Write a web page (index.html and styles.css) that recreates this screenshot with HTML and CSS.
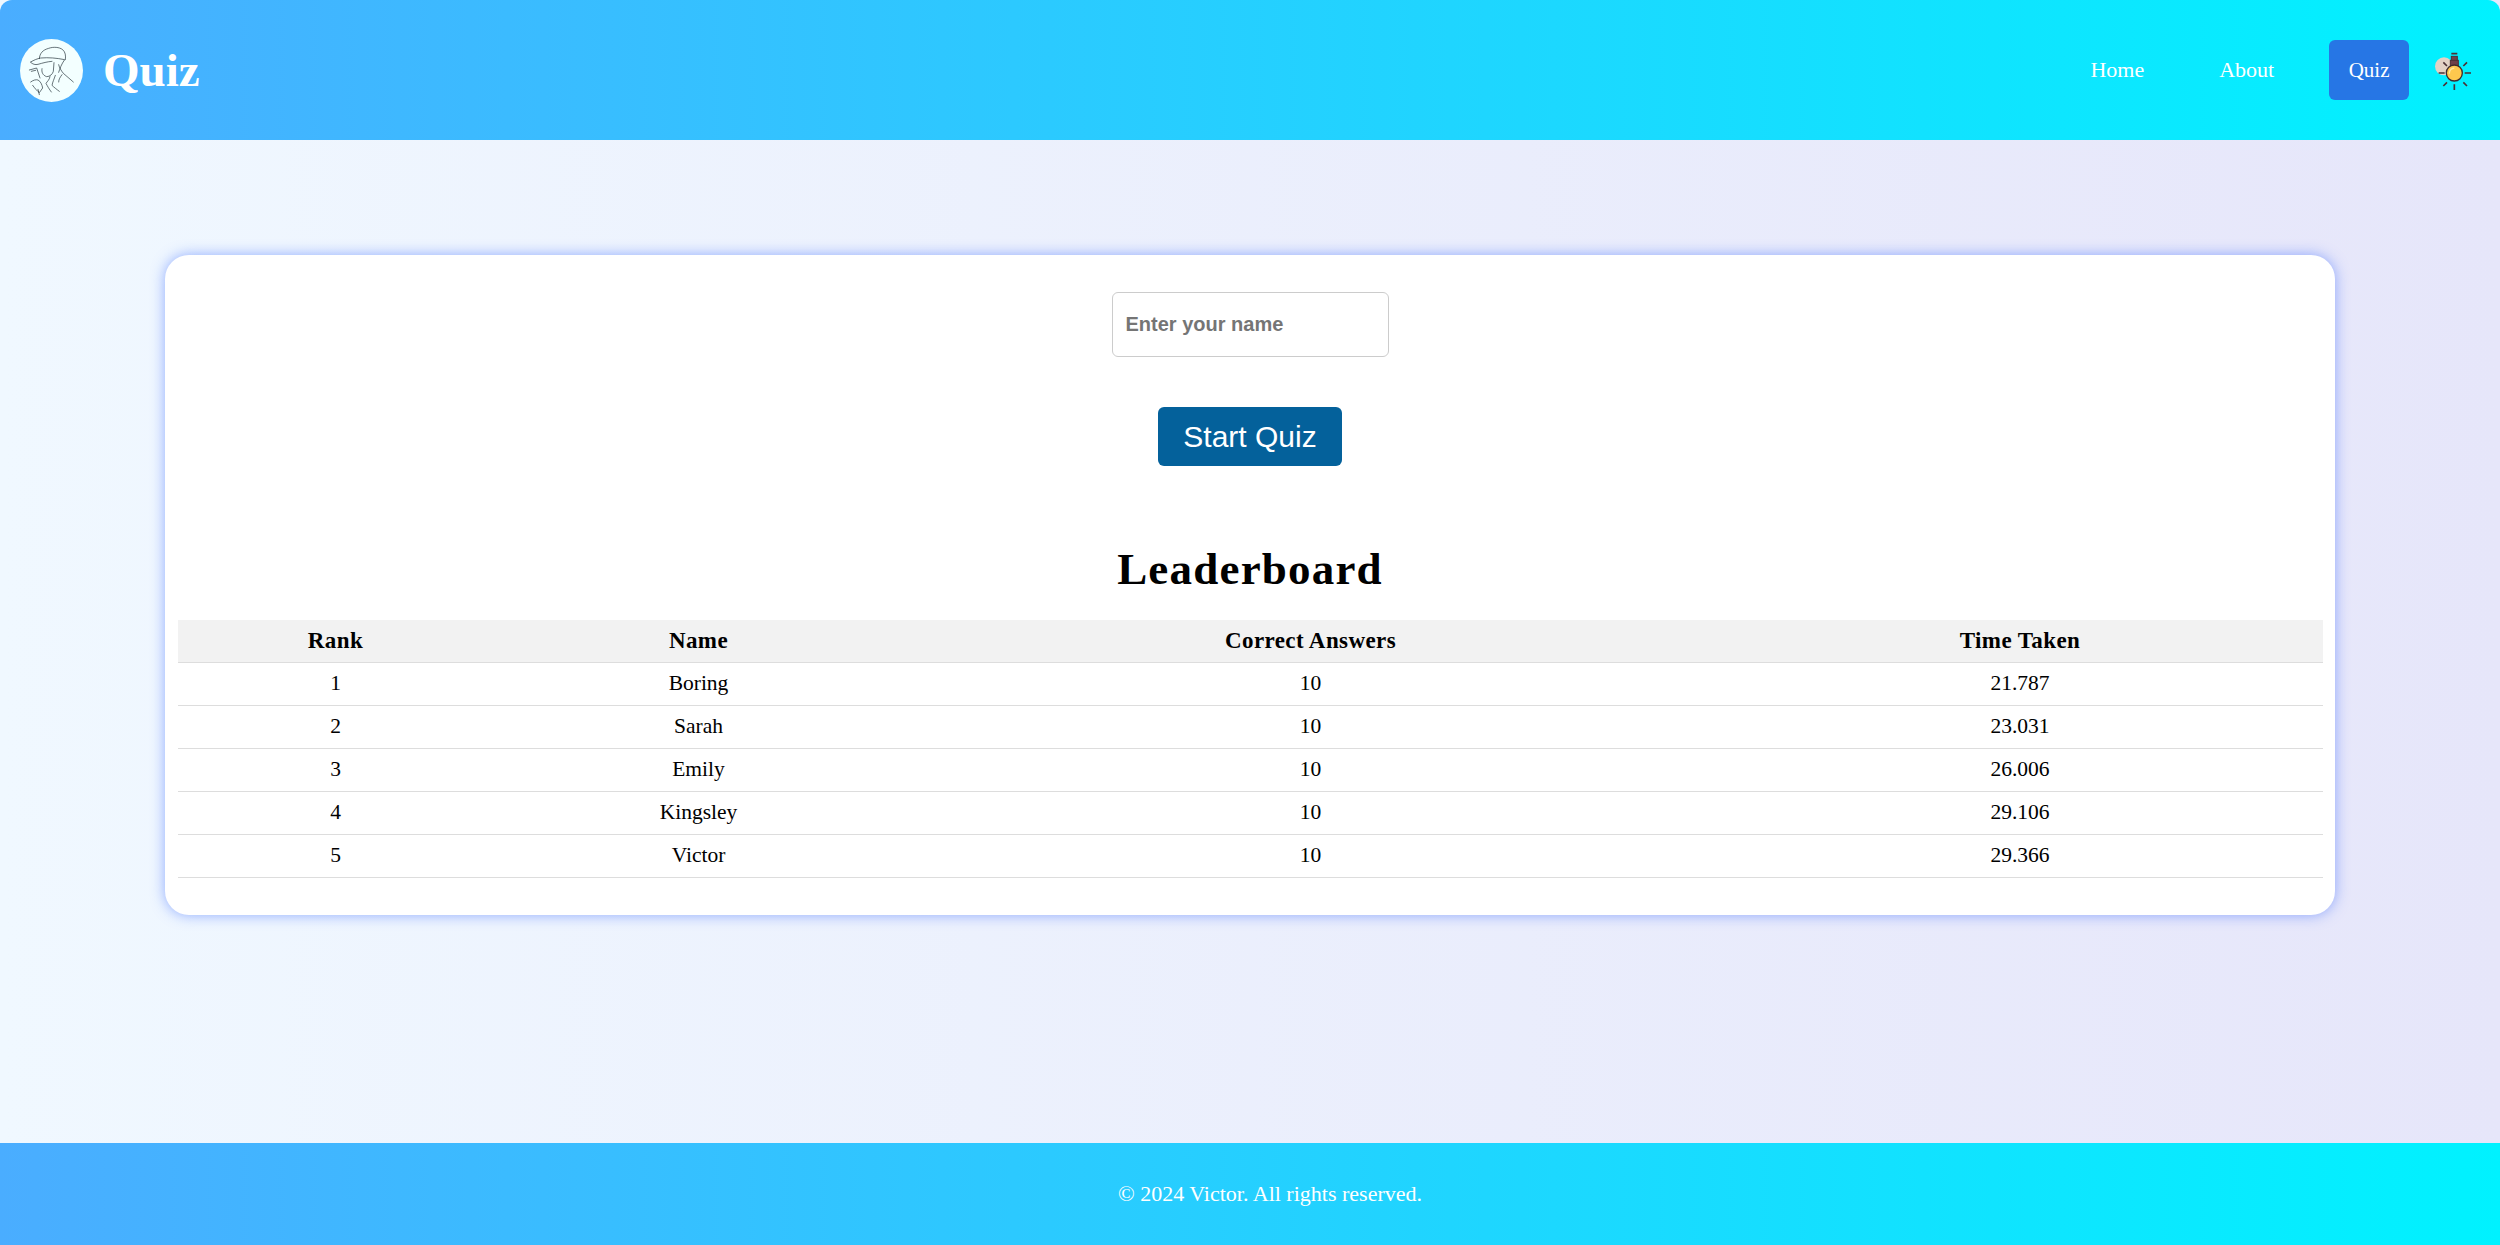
FILE: index.html
```html
<!DOCTYPE html>
<html lang="en">
<head>
<meta charset="utf-8">
<title>Quiz</title>
<link rel="stylesheet" href="styles.css">
</head>
<body>
<header class="site-header">
  <div class="brand">
    <svg class="logo" viewBox="60 115 189 189" aria-hidden="true">
      <circle cx="154.5" cy="209.5" r="94.5" fill="#f3ffff"/>
      <g fill="none" stroke="#16252c" stroke-width="1.9" stroke-linecap="round" stroke-linejoin="round">
        <path d="M118 174c1-16 10-26 28-31 14-5 32-4 42 4 8 7 10 18 8 30"/>
        <path d="M92 184c10-6 20-10 30-12 24-2 48 0 72 5-10 14-14 26-18 38"/>
        <path d="M92 185c6 6 14 8 22 6 14-4 28-8 42-9"/>
        <path d="M126 204c-2 10 2 20 14 24 10 0 18-8 20-16l2-26"/>
        <path d="M88 208l22-6 10 30M94 212l13-3"/>
        <path d="M92 244c8-6 16-8 22-6 8 4 12 14 14 24l-10 14c-6-4-14-14-20-22"/>
        <path d="M114 266l4 16M150 228c-2 10-8 14-12 20 4 8 10 18 16 26"/>
        <path d="M176 192c2 10 8 18 14 26l30 26M166 224c-4 12-8 20-10 30 6 6 14 12 22 18M186 222c-6 8-10 14-10 22"/>
      </g>
    </svg>
    <span class="brand-name">Quiz</span>
  </div>
  <nav class="site-nav">
    <a class="nav-link" href="#">Home</a>
    <a class="nav-link" href="#">About</a>
    <a class="nav-link nav-active" href="#">Quiz</a>
    <svg class="bulb" viewBox="0 0 180 180" aria-hidden="true">
      <circle cx="60" cy="82" r="27" fill="#e3d2c5"/>
      <g stroke="#4b3236" stroke-width="5" fill="none">
        <path d="M82 44h18M44 102h18M122 102h19M91 136v17M58 70l11 11M129 70l-11 11M58 141l11-11M129 141l-11-11"/>
      </g>
      <rect x="82" y="52" width="18" height="14" fill="#6d4048" stroke="#4b3236" stroke-width="3"/>
      <rect x="79" y="64" width="24" height="16" fill="#6d4048" stroke="#4b3236" stroke-width="3"/>
      <circle cx="91" cy="102" r="24" fill="#fdc84e" stroke="#3f2b2e" stroke-width="4"/>
      <path d="M76 104c0-10 6-16 15-17" fill="none" stroke="#ffe6a0" stroke-width="4"/>
    </svg>
  </nav>
</header>

<main class="page-main">
  <section class="card">
    <input class="name-input" type="text" placeholder="Enter your name">
    <button class="start-btn" type="button">Start Quiz</button>
    <h2 class="board-title">Leaderboard</h2>
    <table class="board">
      <colgroup>
        <col class="col-rank"><col class="col-name"><col class="col-correct"><col class="col-time">
      </colgroup>
      <thead>
        <tr><th>Rank</th><th>Name</th><th>Correct Answers</th><th>Time Taken</th></tr>
      </thead>
      <tbody>
        <tr><td>1</td><td>Boring</td><td>10</td><td>21.787</td></tr>
        <tr><td>2</td><td>Sarah</td><td>10</td><td>23.031</td></tr>
        <tr><td>3</td><td>Emily</td><td>10</td><td>26.006</td></tr>
        <tr><td>4</td><td>Kingsley</td><td>10</td><td>29.106</td></tr>
        <tr><td>5</td><td>Victor</td><td>10</td><td>29.366</td></tr>
      </tbody>
    </table>
  </section>
</main>

<footer class="site-footer">
  <p class="copyright">© 2024 Victor. All rights reserved.</p>
</footer>
</body>
</html>
```
FILE: styles.css
```css
* { box-sizing: border-box; }
html, body { height: 100%; }
body {
  margin: 0;
  min-height: 100vh;
  display: flex;
  flex-direction: column;
  font-family: Georgia, "Liberation Serif", "Times New Roman", serif;
  background: linear-gradient(90deg, #f0f8ff, #e6e6fa);
  color: #000;
}
.site-header {
  height: 140px;
  flex: none;
  display: flex;
  align-items: center;
  justify-content: space-between;
  padding: 0 21px 0 20px;
  background: linear-gradient(90deg, #4aadff, #00f2ff);
  border-radius: 12px 12px 0 0;
}
.brand { display: flex; align-items: center; gap: 20px; }
.logo { width: 63px; height: 63px; display: block; }
.brand-name { color: #fff; font-size: 47px; font-weight: 700; line-height: 1; }
.site-nav { display: flex; align-items: center; }
.nav-link {
  color: #fff;
  text-decoration: none;
  font-size: 22px;
  line-height: 60px;
  height: 60px;
  padding: 0 20px;
  margin-right: 35px;
  border-radius: 6px;
}
.nav-active { background: #2676e5; margin-right: 16px; padding: 0 19.5px; font-size: 21px; }
.bulb { width: 60px; height: 60px; margin-top: -2px; margin-right: -5px; margin-left: -1px; }
.page-main { flex: 1; padding: 115px 165px 0; }
.card {
  height: 660px;
  background: #fff;
  border-radius: 24px;
  padding: 37px 12px 0;
  box-shadow: 0 0 14px rgba(50, 100, 255, .5);
  display: flex;
  flex-direction: column;
  align-items: center;
}
.name-input {
  width: 277px;
  height: 65px;
  border: 1px solid #ccc;
  border-radius: 6px;
  padding: 0 13px;
  font-family: "Liberation Sans", Arial, sans-serif;
  font-weight: 700;
  font-size: 20px;
  background: #fff;
}
.name-input::placeholder { color: #757575; opacity: 1; }
.start-btn {
  margin-top: 50px;
  width: 184px;
  height: 59px;
  border: 0;
  border-radius: 6px;
  background: #04619b;
  color: #fff;
  font-family: "Liberation Sans", Arial, sans-serif;
  font-size: 30px;
}
.board-title {
  margin: 78px 0 0;
  font-size: 45px;
  line-height: 50px;
  font-weight: 700;
  letter-spacing: 1.2px;
}
.board {
  margin-top: 26px;
  width: 2145px;
  table-layout: fixed;
  border-collapse: collapse;
  font-size: 21.5px;
}
.col-rank { width: 316px; }
.col-name { width: 410px; }
.col-correct { width: 814px; }
.col-time { width: 605px; }
.board th, .board td {
  height: 43px;
  padding: 0;
  text-align: center;
  border-bottom: 1px solid #ddd;
}
.board th { height: 42px; background: #f2f2f2; font-weight: 700; font-size: 23px; letter-spacing: .4px; }
.site-footer {
  height: 102px;
  flex: none;
  display: flex;
  align-items: center;
  justify-content: center;
  padding-left: 40px;
  background: linear-gradient(90deg, #4aadff, #00f2ff);
}
.copyright { margin: 0; color: #fff; font-size: 22px; }
```
